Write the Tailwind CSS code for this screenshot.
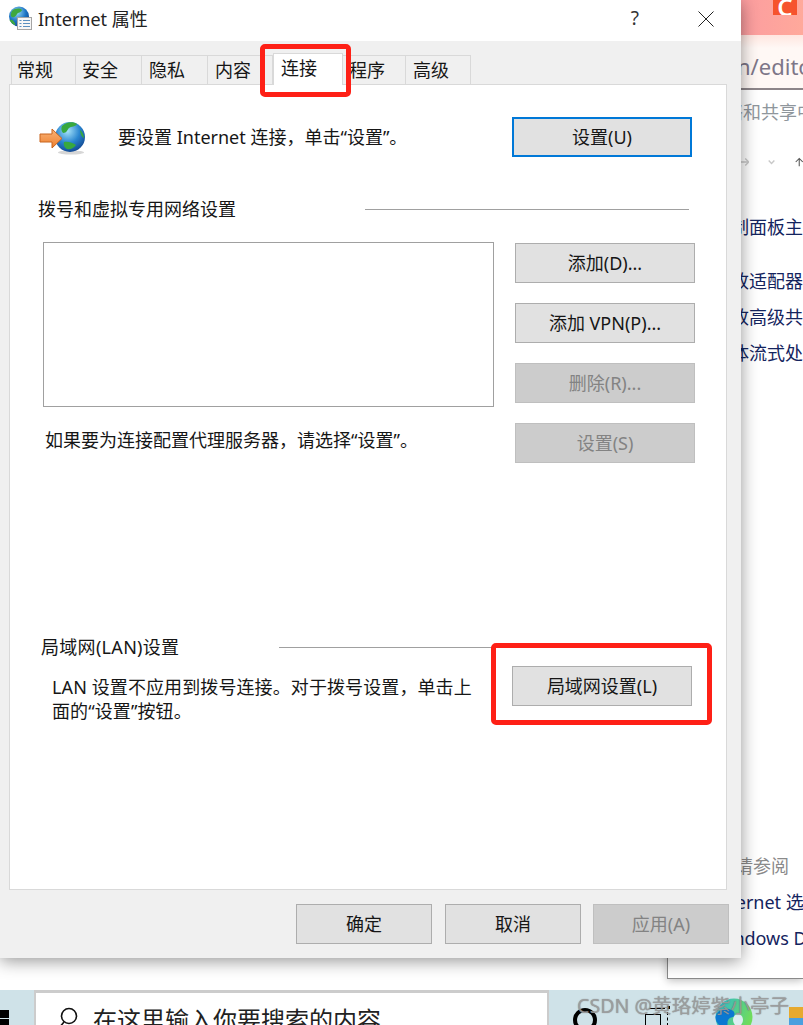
<!DOCTYPE html>
<html lang="zh">
<head>
<meta charset="utf-8">
<script src="https://cdn.jsdelivr.net/npm/@tailwindcss/browser@4"></script>
</head>
<body class="m-0">
<div class="relative w-[803px] h-[1025px] overflow-hidden bg-white font-['Noto_Sans','Noto_Sans_CJK_SC',sans-serif] text-[18px] leading-[24px] text-[#161616]">

  <!-- browser window behind -->
  <div class="absolute left-[667px] top-0 w-[136px] h-[979px] bg-white border-l border-b border-[#8a8a8a] shadow-[0_2px_8px_rgba(0,0,0,0.25)]">
    <div class="h-[35px] bg-gradient-to-r from-[#f78ea4] to-[#ffa99b] flex justify-end">
      <div class="w-[24px] h-[15px] bg-[#f6532d] mr-[6px] text-white text-[24px] font-semibold leading-[14px] text-center overflow-hidden">C</div>
    </div>
    <div class="h-[55px] bg-gradient-to-b from-[#ffe6e0] via-[#fff8f5] via-[25%] to-[#fff8f5] border-b-2 border-[#8d8589] pl-[69px] pt-[19px] text-[22px] text-[#7d7688] whitespace-nowrap">n/editor</div>
    <div class="pl-[39px] pt-[10px] text-[#8f969c] whitespace-nowrap">网络和共享中心</div>
    <div class="mt-[18px] h-[40px] pl-[73px] flex items-center gap-[19px]">
      <svg class="w-[12px] h-[12px]" viewBox="0 0 12 12" fill="none" stroke="#c8c8c8" stroke-width="2"><path d="M0 6h11M6 1l5 5-5 5"/></svg>
      <svg class="w-[10px] h-[6px]" viewBox="0 0 10 6" fill="none" stroke="#c8c8c8" stroke-width="2"><path d="M1 1l4 4 4-4"/></svg>
      <svg class="w-[12px] h-[12px]" viewBox="0 0 12 12" fill="none" stroke="#555" stroke-width="1.5"><path d="M6 12V1M1 6l5-5 5 5"/></svg>
    </div>
    <div class="pl-[45px] pt-[33px] text-[#14245e] whitespace-nowrap">控制面板主页</div>
    <div class="pl-[45px] pt-[30px] text-[#14245e] whitespace-nowrap">更改适配器设置</div>
    <div class="pl-[45px] pt-[12px] text-[#14245e] whitespace-nowrap">更改高级共享设置</div>
    <div class="pl-[45px] pt-[12px] text-[#14245e] whitespace-nowrap">媒体流式处理选项</div>
    <div class="pl-[49px] pt-[489px] text-[#8a8a8a] whitespace-nowrap">另请参阅</div>
    <div class="pl-[44px] pt-[12px] text-[#14245e] whitespace-nowrap">Internet 选项</div>
    <div class="pl-[44px] pt-[12px] text-[#14245e] whitespace-nowrap">Windows Defender 防火墙</div>
  </div>

  <!-- taskbar -->
  <div class="absolute left-0 top-[990px] w-[803px] h-[35px] bg-[#cfe2e8] flex">
    <div class="w-[34px] pt-[20px]">
      <div class="w-[9px] h-[8px] bg-black"></div>
      <div class="w-[9px] h-[8px] mt-px bg-black"></div>
    </div>
    <div class="w-[515px] h-[35px] bg-white border-t-[3px] border-l-[2px] border-r-[2px] border-[#cccccc] flex items-start pl-[20px]">
      <svg class="w-[24px] h-[30px] mt-[12px]" viewBox="0 0 24 30" fill="none" stroke="#111" stroke-width="1.6"><circle cx="13" cy="11" r="7.5"/><path d="M8 17l-5 6"/></svg>
      <span class="ml-[13px] mt-[12px] text-[24px] leading-[30px] text-[#222] whitespace-nowrap">在这里输入你要搜索的内容</span>
    </div>
    <div class="flex-1 relative">
      <div class="absolute left-[24px] top-[18px] w-[24px] h-[24px] rounded-full border-[4px] border-black"></div>
      <div class="absolute left-[96px] top-[24px] w-[16px] h-[12px] border border-black"></div>
      <div class="absolute left-[100px] top-[18px] w-[16px] h-px bg-black"></div>
      <div class="absolute left-[118px] top-[16px] w-[3px] h-[3px] bg-black"></div>
      <div class="absolute left-[118px] top-[22px] w-[1px] h-[14px] border-l border-dashed border-black"></div>
      <svg class="absolute left-[166px] top-[8px] w-[38px] h-[27px]" viewBox="0 0 38 27">
        <defs>
          <linearGradient id="e1" x1="0" y1="0" x2="1" y2="0.4"><stop offset="0" stop-color="#2bb5d8"/><stop offset="1" stop-color="#6fdc5c"/></linearGradient>
        </defs>
        <circle cx="19" cy="19" r="18.5" fill="url(#e1)"/>
        <path d="M0.5 19c2-7 9-10 16-7 3 1 4 4 2 7-3 0-6 2-6 6v2H4C2 25 .5 22 .5 19z" fill="#0b78d1"/>
        <ellipse cx="23" cy="22" rx="5" ry="6" fill="#ddeef2"/>
      </svg>
      <div class="absolute left-[240px] top-[17px] w-[16px] h-[18px] bg-[#4a9fdf]">
        <div class="h-[11px] bg-[#e6a92e]"></div>
      </div>
    </div>
  </div>
  <div class="absolute left-[577px] top-[993px] text-[19.6px] leading-[26px] text-[rgba(160,160,160,0.85)] [text-shadow:0_0_1px_rgba(70,70,70,0.6)] whitespace-nowrap">CSDN @黄珞婷紫小亭子</div>

  <!-- dialog -->
  <div class="absolute left-0 top-0 w-[741px] h-[958px] bg-[#f0f0f0] shadow-[0_3px_16px_rgba(0,0,0,0.42)] flex flex-col">
    <!-- title bar -->
    <div class="h-[41px] bg-white flex items-center pl-[8px] shrink-0">
      <svg class="w-[25px] h-[24px] -mt-[6px]" viewBox="0 0 25 24">
        <defs><radialGradient id="g0" cx="0.4" cy="0.3" r="0.8"><stop offset="0" stop-color="#9adcf6"/><stop offset="0.55" stop-color="#1c74c4"/><stop offset="1" stop-color="#0d3a80"/></radialGradient></defs>
        <circle cx="11" cy="10.5" r="10" fill="url(#g0)"/>
        <path d="M4 5c3-3 8-3 10-1-1 3-4 2-5 4s-3 4-5 3-1-4 0-6zM1.5 14c3-1 5 1 6 5l-1 0c-2-1-4-3-5-5z" fill="#3fa83f"/>
        <rect x="9.5" y="11.5" width="14" height="12" fill="#f6f6f6" stroke="#a5a5a5"/>
        <path d="M11.5 14.5h2M15 14.5h7M11.5 17.5h2M15 17.5h7M11.5 20.5h2M15 20.5h7" stroke="#5a8fbf"/>
      </svg>
      <span class="ml-[5px] -mt-[4px] text-[#222]">Internet 属性</span>
      <span class="ml-auto mr-[59px] -mt-[6px] text-[19px] text-[#333]">?</span>
      <svg class="w-[16px] h-[16px] mr-[27px] -mt-[3px]" viewBox="0 0 16 16" fill="none" stroke="#222" stroke-width="1"><path d="M0.5 0.5l15 15M15.5 0.5l-15 15"/></svg>
    </div>

    <!-- tabs -->
    <div class="h-[43px] pl-[11px] flex items-end shrink-0">
      <div class="w-[65px] h-[29px] bg-[#f0f0f0] border border-b-0 border-[#d9d9d9] pl-[5px] leading-[28px]">常规</div>
      <div class="w-[66px] h-[29px] bg-[#f0f0f0] border border-l-0 border-b-0 border-[#d9d9d9] pl-[6px] leading-[28px]">安全</div>
      <div class="w-[66px] h-[29px] bg-[#f0f0f0] border border-l-0 border-b-0 border-[#d9d9d9] pl-[7px] leading-[28px]">隐私</div>
      <div class="w-[65px] h-[29px] bg-[#f0f0f0] border border-l-0 border-b-0 border-[#d9d9d9] pl-[7px] leading-[28px]">内容</div>
      <div class="relative z-10 -mb-px w-[70px] h-[32px] bg-white border border-b-0 border-[#d9d9d9] pl-[7px] leading-[28px]">连接</div>
      <div class="w-[63px] h-[29px] bg-[#f0f0f0] border border-l-0 border-b-0 border-[#d9d9d9] pl-[6px] leading-[28px]">程序</div>
      <div class="w-[65px] h-[29px] bg-[#f0f0f0] border border-l-0 border-b-0 border-[#d9d9d9] pl-[7px] leading-[28px]">高级</div>
    </div>

    <!-- panel -->
    <div class="ml-[9px] w-[718px] h-[806px] bg-white border border-[#d9d9d9] flex flex-col shrink-0">
      <div class="mt-[32px] h-[40px] flex items-center pl-[28px] pr-[34px]">
        <svg class="w-[48px] h-[35px]" viewBox="0 0 48 35">
          <defs>
            <radialGradient id="g1" cx="0.42" cy="0.3" r="0.8"><stop offset="0" stop-color="#a6e2f8"/><stop offset="0.5" stop-color="#2a86d0"/><stop offset="1" stop-color="#0c3a84"/></radialGradient>
            <linearGradient id="a1" x1="0" y1="0" x2="0" y2="1"><stop offset="0" stop-color="#f9b47a"/><stop offset="1" stop-color="#ee7f2c"/></linearGradient>
          </defs>
          <ellipse cx="33" cy="32.5" rx="13" ry="2" fill="#d6d6d6"/>
          <circle cx="32" cy="17" r="15" fill="url(#g1)"/>
          <path d="M24 6c4-4 11-5 15-2-1 3-6 2-8 4s-2 5-6 5c-2-2-2-5-1-7zM42 10c2 1 4 5 4 8-2-1-4-4-4-8zM26 22c4-1 9 1 12 3-2 3-6 5-9 4-2-1-4-4-3-7z" fill="#38a83e"/>
          <path d="M2 14h12V9l10 9.5-10 9.5v-6H2z" fill="url(#a1)" stroke="#c8641e" stroke-width="1"/>
        </svg>
        <span class="ml-[32px]">要设置 Internet 连接，单击“设置”。</span>
        <div class="ml-auto w-[180px] h-[40px] bg-[#e1e1e1] border-2 border-[#0078d7] flex items-center justify-center">设置(U)</div>
      </div>

      <div class="mt-[40px] h-[24px] flex items-center pl-[28px] pr-[37px]">
        <span>拨号和虚拟专用网络设置</span>
        <div class="ml-auto w-[324px] h-px bg-[#a0a0a0]"></div>
      </div>

      <div class="mt-[12px] flex pl-[33px]">
        <div class="w-[451px] h-[165px] mt-[9px] bg-white border border-[#a0a0a0]"></div>
        <div class="ml-[21px] flex flex-col gap-[20px] mt-[10px]">
          <div class="w-[180px] h-[40px] bg-[#e1e1e1] border border-[#adadad] flex items-center justify-center">添加(D)...</div>
          <div class="w-[180px] h-[40px] bg-[#e1e1e1] border border-[#adadad] flex items-center justify-center">添加 VPN(P)...</div>
          <div class="w-[180px] h-[40px] bg-[#cccccc] border border-[#bfbfbf] text-[#838383] flex items-center justify-center">删除(R)...</div>
        </div>
      </div>

      <div class="mt-[16px] flex pl-[35px]">
        <span class="w-[470px] pt-[5px]">如果要为连接配置代理服务器，请选择“设置”。</span>
        <div class="w-[180px] h-[40px] bg-[#cccccc] border border-[#bfbfbf] text-[#838383] flex items-center justify-center">设置(S)</div>
      </div>

      <div class="mt-[172px] h-[24px] flex items-center pl-[31px]">
        <span class="tracking-[0.3px]">局域网(LAN)设置</span>
        <div class="ml-[100px] w-[215px] h-px bg-[#a0a0a0]"></div>
      </div>

      <div class="flex mt-[7px] pl-[42px]">
        <p class="w-[430px] mt-[9px] tracking-[0.1px]">LAN 设置不应用到拨号连接。对于拨号设置，单击上面的“设置”按钮。</p>
        <div class="ml-[30px] w-[180px] h-[40px] bg-[#e1e1e1] border border-[#adadad] flex items-center justify-center">局域网设置(L)</div>
      </div>
    </div>

    <!-- footer -->
    <div class="mt-[14px] flex pl-[296px] gap-[13px]">
      <div class="w-[136px] h-[40px] bg-[#e1e1e1] border border-[#adadad] flex items-center justify-center">确定</div>
      <div class="w-[136px] h-[40px] bg-[#e1e1e1] border border-[#adadad] flex items-center justify-center">取消</div>
      <div class="-ml-px w-[136px] h-[40px] bg-[#cccccc] border border-[#bfbfbf] text-[#838383] flex items-center justify-center">应用(A)</div>
    </div>
  </div>

  <!-- red annotation boxes -->
  <div class="absolute left-[260px] top-[44px] w-[91px] h-[53px] border-[5px] border-[#fe2016] rounded-[5px]"></div>
  <div class="absolute left-[491px] top-[643px] w-[221px] h-[82px] border-[5px] border-[#fe2016] rounded-[5px]"></div>
</div>
</body>
</html>
